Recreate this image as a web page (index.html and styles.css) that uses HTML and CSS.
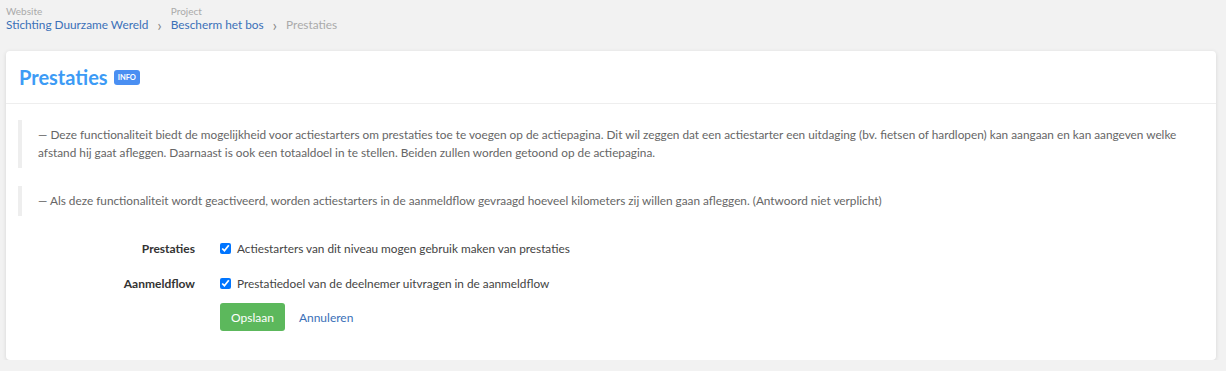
FILE: index.html
```html
<!DOCTYPE html>
<html>
    <head>
        <meta charset="utf-8" />
        <title>Prestaties</title>
        <link rel="stylesheet" href="styles.css">
    </head>
    <body>
        <nav class="crumbs">
            <div class="crumb">
                <span class="crumb-label">Website</span>
                <a href="#">Stichting Duurzame Wereld</a>
            </div>
            <span class="crumb-sep">&rsaquo;</span>
            <div class="crumb">
                <span class="crumb-label">Project</span>
                <a href="#">Bescherm het bos</a>
            </div>
            <span class="crumb-sep">&rsaquo;</span>
            <div class="crumb">
                <span class="crumb-label">&nbsp;</span>
                <span class="crumb-current">Prestaties</span>
            </div>
        </nav>

        <div class="panel">
            <div class="panel-head">
                <h1>Prestaties</h1>
                <span class="badge">INFO</span>
            </div>
            <div class="panel-body">
                <blockquote>
                    &mdash; Deze functionaliteit biedt de mogelijkheid voor actiestarters om prestaties toe te voegen op de actiepagina. Dit wil zeggen dat een actiestarter een uitdaging (bv. fietsen of hardlopen) kan aangaan en kan aangeven welke afstand hij gaat afleggen. Daarnaast is ook een totaaldoel in te stellen. Beiden zullen worden getoond op de actiepagina.
                </blockquote>
                <blockquote>
                    &mdash; Als deze functionaliteit wordt geactiveerd, worden actiestarters in de aanmeldflow gevraagd hoeveel kilometers zij willen gaan afleggen. (Antwoord niet verplicht)
                </blockquote>

                <form class="form">
                    <div class="row">
                        <label class="row-label" for="prestaties">Prestaties</label>
                        <label class="check"><input type="checkbox" id="prestaties" checked> Actiestarters van dit niveau mogen gebruik maken van prestaties</label>
                    </div>
                    <div class="row">
                        <label class="row-label" for="aanmeld">Aanmeldflow</label>
                        <label class="check"><input type="checkbox" id="aanmeld" checked> Prestatiedoel van de deelnemer uitvragen in de aanmeldflow</label>
                    </div>
                    <div class="row actions">
                        <span class="row-label"></span>
                        <button type="submit" class="btn">Opslaan</button>
                        <a href="#" class="cancel">Annuleren</a>
                    </div>
                </form>
            </div>
        </div>
    </body>
</html>
```

FILE: styles.css
```css
body {
    margin: 0;
    padding: 6px 10px 0 6px;
    background: #f2f2f2;
    font-family: Lato, "Open Sans", sans-serif;
    font-size: 13px;
    color: #555;
}

a {
    color: #3a70b8;
    text-decoration: none;
}

.crumbs {
    display: flex;
    align-items: flex-end;
    height: 27px;
}

.crumb {
    display: flex;
    flex-direction: column;
}

.crumb-label {
    font-size: 10px;
    line-height: 12px;
    color: #aaa;
}

.crumb a,
.crumb-current {
    font-size: 11.8px;
    line-height: 16px;
}

.crumb-current {
    color: #aaa;
}

.crumb-sep {
    color: #888;
    font-size: 16px;
    line-height: 16px;
    margin: 0 9px;
}

.panel {
    margin-top: 18px;
    background: #fff;
    border-radius: 4px;
    box-shadow: 0 1px 4px rgba(0, 0, 0, 0.12);
}

.panel-head {
    display: flex;
    align-items: center;
    height: 52px;
    padding: 0 13px;
    border-bottom: 1px solid #eee;
}

h1 {
    margin: 0;
    font-size: 20px;
    font-weight: 700;
    color: #3d9bf5;
}

.badge {
    margin-left: 6px;
    padding: 2px 4px;
    border-radius: 3px;
    background: #4a8ff2;
    color: #fff;
    font-size: 7.5px;
    font-weight: 700;
    line-height: 11px;
}

.panel-body {
    padding: 16px 12px 29px 12px;
}

blockquote {
    margin: 0 0 18px 0;
    padding: 6px 0 6px 16px;
    border-left: 4px solid #eee;
    font-size: 11.8px;
    line-height: 18px;
    color: #666;
}

.form {
    margin-top: 25px;
}

.row {
    display: flex;
    align-items: center;
    margin-bottom: 20px;
    color: #333;
}

.row-label {
    width: 177px;
    text-align: right;
    font-weight: 700;
    padding-right: 25px;
    font-size: 12px;
}

.check {
    display: flex;
    align-items: center;
    font-size: 11.8px;
    color: #444;
}

.check input {
    margin: 0 6px 0 0;
    width: 11px;
    height: 11px;
}

.actions {
    margin: -8px 0 0 0;
}

.btn {
    height: 28px;
    padding: 0 11px;
    border: 0;
    border-radius: 3px;
    background: #5cb85c;
    color: #fff;
    font-family: inherit;
    font-size: 12px;
}

.cancel {
    margin-left: 14px;
    font-size: 12px;
}
```
